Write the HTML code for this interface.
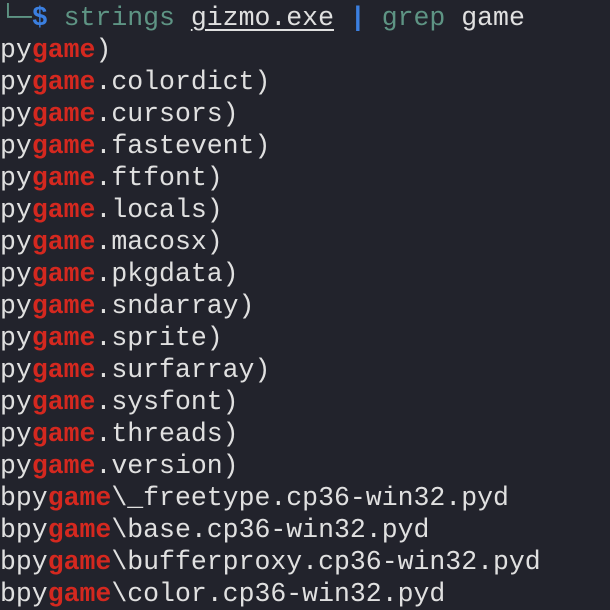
<!DOCTYPE html>
<html><head><style>
html,body{margin:0;padding:0;background:#22232c;width:610px;height:590px;overflow:hidden}
pre{margin:0;position:absolute;left:0;top:2px;font-family:"Liberation Mono","DejaVu Sans Mono",monospace;font-size:26.5px;line-height:32px;color:#e0e0e0;white-space:pre}
.r{color:#d4281f;font-weight:bold}
.g{color:#5e9484}
.b{color:#3b7fe0;font-weight:bold}
.l{color:#5e9484}
u{text-decoration:underline;text-underline-offset:4px}
</style></head><body>
<pre><span class="l">└─</span><span class="b">$</span> <span class="g">strings</span> <u>gizmo.exe</u> <span class="b">|</span> <span class="g">grep</span> game
py<span class="r">game</span>)
py<span class="r">game</span>.colordict)
py<span class="r">game</span>.cursors)
py<span class="r">game</span>.fastevent)
py<span class="r">game</span>.ftfont)
py<span class="r">game</span>.locals)
py<span class="r">game</span>.macosx)
py<span class="r">game</span>.pkgdata)
py<span class="r">game</span>.sndarray)
py<span class="r">game</span>.sprite)
py<span class="r">game</span>.surfarray)
py<span class="r">game</span>.sysfont)
py<span class="r">game</span>.threads)
py<span class="r">game</span>.version)
bpy<span class="r">game</span>\_freetype.cp36-win32.pyd
bpy<span class="r">game</span>\base.cp36-win32.pyd
bpy<span class="r">game</span>\bufferproxy.cp36-win32.pyd
bpy<span class="r">game</span>\color.cp36-win32.pyd</pre>
</body></html>
